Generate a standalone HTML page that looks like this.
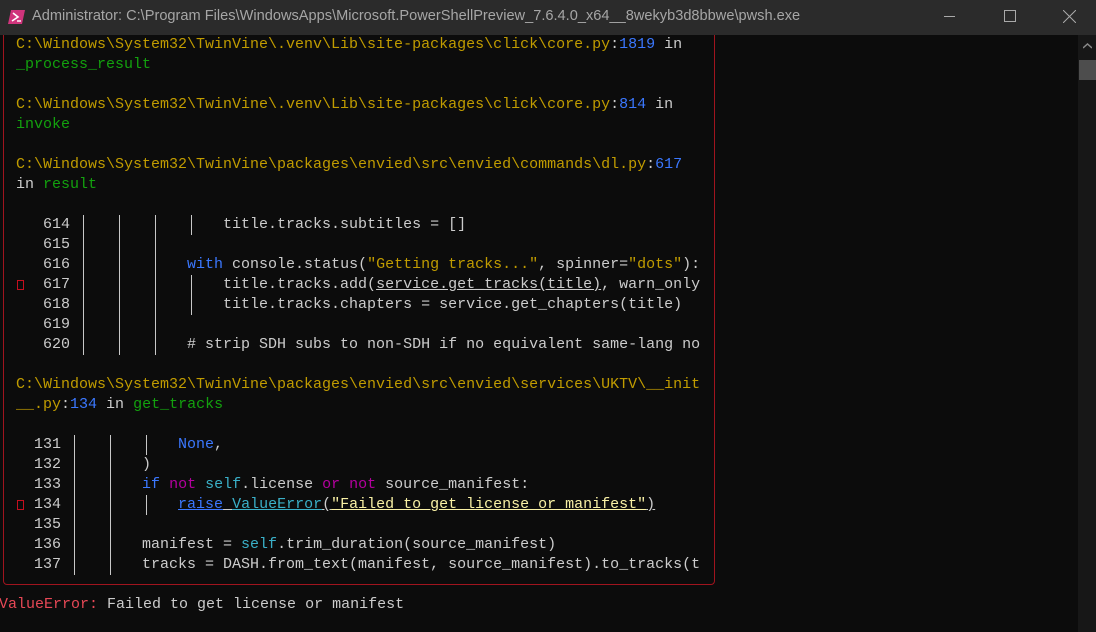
<!DOCTYPE html>
<html><head><meta charset="utf-8"><style>
*{margin:0;padding:0;box-sizing:border-box}
body{width:1096px;height:632px;background:#0c0c0c;overflow:hidden;position:relative;font-family:"Liberation Mono",monospace;font-size:15px;color:#cccccc}
#tb{position:absolute;left:0;top:0;width:1096px;height:35px;background:#2b2b2b;z-index:5}
#tt{position:absolute;left:32px;top:8px;font:14.6px "Liberation Sans",sans-serif;color:#a6a6a6;white-space:nowrap}
.r{position:absolute;left:16px;height:20px;line-height:20px;white-space:pre;width:688px;overflow:hidden}
.y{color:#c19c00}.g{color:#13a10e}.b{color:#3b78ff}.m{color:#b4009e}.c{color:#3ab0c8}.s{color:#c19c00}.sy{color:#f9f1a5}.red{color:#e74856}
.u{text-decoration:underline}
.bar{position:absolute;width:1px;height:20px}
.mk{position:absolute;left:17px;width:7px;height:10px;border:1px solid #c50f1f}
#panel{position:absolute;left:3px;top:20px;width:712px;height:565px;border:1px solid #a0141e;border-radius:4px}
#sb{position:absolute;left:1078px;top:35px;width:18px;height:597px;background:#171717}
</style></head><body>
<div id="tb">
<svg style="position:absolute;left:8px;top:9px" width="18" height="16" viewBox="0 0 18 16"><path d="M3 1h14l-3 14H0z" fill="#d0347c"/><path d="M5 4l5 4-6 4" stroke="#fff" stroke-width="1.6" fill="none"/><path d="M9 12h4" stroke="#fff" stroke-width="1.4"/></svg>
<div id="tt">Administrator: C:\Program Files\WindowsApps\Microsoft.PowerShellPreview_7.6.4.0_x64__8wekyb3d8bbwe\pwsh.exe</div>
<div style="position:absolute;left:944px;top:16px;width:11px;height:1px;background:#aaa"></div>
<div style="position:absolute;left:1004px;top:10px;width:12px;height:12px;border:1px solid #aaa"></div>
<svg style="position:absolute;left:1063px;top:10px" width="13" height="13"><path d="M0 0L13 13M13 0L0 13" stroke="#aaa" stroke-width="1"/></svg>
</div>
<div id="panel"></div>
<div id="sb"><svg style="position:absolute;left:5px;top:8px" width="9" height="6"><path d="M0 5L4.5 1 9 5" stroke="#888" stroke-width="1.5" fill="none"/></svg><div style="position:absolute;left:1px;top:25px;width:17px;height:20px;background:#4d4d4d"></div></div>

<div class="r" style="top:35px"><span class="y">C:\Windows\System32\TwinVine\.venv\Lib\site-packages\click\core.py</span>:<span class="b">1819</span> in</div>
<div class="r g" style="top:55px">_process_result</div>
<div class="r" style="top:95px"><span class="y">C:\Windows\System32\TwinVine\.venv\Lib\site-packages\click\core.py</span>:<span class="b">814</span> in</div>
<div class="r g" style="top:115px">invoke</div>
<div class="r" style="top:155px"><span class="y">C:\Windows\System32\TwinVine\packages\envied\src\envied\commands\dl.py</span>:<span class="b">617</span></div>
<div class="r" style="top:175px">in <span class="g">result</span></div>

<div class="r" style="top:215px">   614                 title.tracks.subtitles = []</div>
<div class="r" style="top:235px">   615</div>
<div class="r" style="top:255px">   616             <span class="b">with</span> console.status(<span class="s">"Getting tracks..."</span>, spinner=<span class="s">"dots"</span>):</div>
<div class="r" style="top:275px">   617                 title.tracks.add(<span class="u">service.get_tracks(title)</span>, warn_only</div>
<div class="r" style="top:295px">   618                 title.tracks.chapters = service.get_chapters(title)</div>
<div class="r" style="top:315px">   619</div>
<div class="r" style="top:335px">   620             # strip SDH subs to non-SDH if no equivalent same-lang no</div>
<div class="mk" style="top:280px"></div>

<div class="r" style="top:375px"><span class="y">C:\Windows\System32\TwinVine\packages\envied\src\envied\services\UKTV\__init</span></div>
<div class="r" style="top:395px"><span class="y">__.py</span>:<span class="b">134</span> in <span class="g">get_tracks</span></div>

<div class="r" style="top:435px">  131             <span class="b">None</span>,</div>
<div class="r" style="top:455px">  132         )</div>
<div class="r" style="top:475px">  133         <span class="b">if</span> <span class="m">not</span> <span class="c">self</span>.license <span class="m">or</span> <span class="m">not</span> source_manifest:</div>
<div class="r" style="top:495px">  134             <span class="b u">raise</span><span class="u"> </span><span class="c u">ValueError</span><span class="u">(</span><span class="sy u">"Failed to get license or manifest"</span><span class="u">)</span></div>
<div class="r" style="top:515px">  135</div>
<div class="r" style="top:535px">  136         manifest = <span class="c">self</span>.trim_duration(source_manifest)</div>
<div class="r" style="top:555px">  137         tracks = DASH.from_text(manifest, source_manifest).to_tracks(t</div>
<div class="mk" style="top:500px"></div>

<div class="r" style="top:595px;left:-1px"><span class="red">ValueError:</span> Failed to get license or manifest</div>

<div id="bars"></div>
<script>
var h='';
function bar(col,top,c){h+='<div class="bar" style="left:'+(16+col*9+4)+'px;top:'+top+'px;background:'+c+'"></div>';}
for(var i=0;i<7;i++){var t=215+i*20;[7,11,15].forEach(function(c){bar(c,t,'#c8c8c8');});}
[215,275,295].forEach(function(t){bar(19,t,'#c8c8c8');});
for(var i=0;i<7;i++){var t=435+i*20;[6,10].forEach(function(c){bar(c,t,'#c8c8c8');});}
[435,495].forEach(function(t){bar(14,t,'#c8c8c8');});
document.getElementById('bars').innerHTML=h;
</script>
</body></html>
